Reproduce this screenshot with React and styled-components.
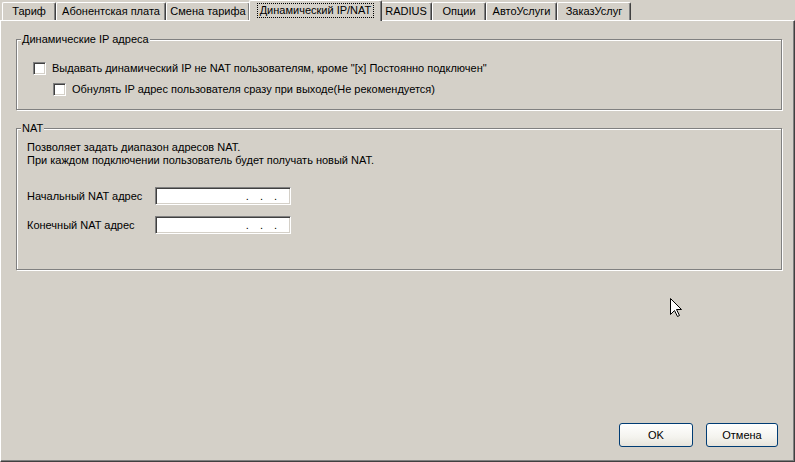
import React from 'react';
import styled, { createGlobalStyle } from 'styled-components';

const GlobalStyle = createGlobalStyle`
  html, body {
    margin: 0;
    padding: 0;
    background: #d4d0c8;
  }
  body {
    font-family: 'Liberation Sans', Arial, sans-serif;
    font-size: 11px;
    color: #000;
  }
`;

const Window = styled.div`
  position: relative;
  width: 795px;
  height: 462px;
  background: #d4d0c8;
  display: flex;
  flex-direction: column;
  overflow: hidden;
`;

const TabStrip = styled.div`
  height: 20px;
  display: flex;
  align-items: flex-start;
  padding-left: 2px;
  flex-shrink: 0;
`;

const Tab = styled.div`
  box-sizing: border-box;
  width: ${(p) => (p.$active ? p.$w + 3 : p.$w)}px;
  height: ${(p) => (p.$active ? 21 : 18)}px;
  margin: ${(p) => (p.$active ? '0 -2px -1px -1px' : '2px 0 0 0')};
  position: ${(p) => (p.$active ? 'relative' : 'static')};
  z-index: ${(p) => (p.$active ? 1 : 'auto')};
  background: #d4d0c8;
  border-top: 1px solid #fff;
  border-left: 1px solid #fff;
  border-right: 1px solid #404040;
  border-radius: 2px 2px 0 0;
  box-shadow: inset -1px 0 0 #808080;
  display: flex;
  justify-content: center;
  align-items: flex-start;
  padding-top: ${(p) => (p.$active ? 3 : 2)}px;
  white-space: nowrap;
  line-height: 13px;
`;

const Focus = styled.span`
  outline: 1px dotted #000;
  outline-offset: 0;
  padding: 0 2px;
  line-height: 13px;
`;

const Panel = styled.div`
  flex: 1;
  box-sizing: border-box;
  border-top: 1px solid #fff;
  border-left: 1px solid #fff;
  border-right: 1px solid #404040;
  border-bottom: 1px solid #404040;
  box-shadow: inset -1px -1px 0 #808080;
  display: flex;
  flex-direction: column;
  padding: 12px 16px 14px 15px;
`;

const Group = styled.fieldset`
  margin: ${(p) => p.$top || 0}px 0 0 0;
  width: 766px;
  box-sizing: border-box;
  min-width: 0;
  border: 1px solid #808080;
  box-shadow: inset 1px 1px 0 #fff, 1px 1px 0 #fff;
  padding: ${(p) => p.$pad};
`;

const Legend = styled.legend`
  margin-left: 0;
  padding: 0 1px;
  line-height: 13px;
  background: #d4d0c8;
`;

const GroupBody = styled.div`
  padding-left: ${(p) => p.$indent}px;
`;

const CheckRow = styled.label`
  display: flex;
  align-items: center;
  gap: 6px;
  height: 13px;
  margin-left: ${(p) => p.$indent || 0}px;
  margin-top: ${(p) => p.$gap || 0}px;
  line-height: 13px;
  white-space: nowrap;
`;

const Box = styled.span`
  width: 13px;
  height: 13px;
  box-sizing: border-box;
  background: #fff;
  border: 1px solid;
  border-color: #808080 #fff #fff #808080;
  box-shadow: inset 1px 1px 0 #404040, inset -1px -1px 0 #d4d0c8;
  flex-shrink: 0;
`;

const Note = styled.div`
  line-height: 13px;
  white-space: nowrap;
`;

const FieldRow = styled.div`
  display: flex;
  align-items: center;
  height: 18px;
  margin-top: ${(p) => p.$gap}px;
`;

const FieldLabel = styled.span`
  width: 128px;
  line-height: 13px;
`;

const IpBox = styled.div`
  width: 136px;
  height: 18px;
  box-sizing: border-box;
  background: #fff;
  border: 1px solid;
  border-color: #808080 #fff #fff #808080;
  box-shadow: inset 1px 1px 0 #404040, inset -1px -1px 0 #d4d0c8;
  display: flex;
  justify-content: flex-end;
  align-items: center;
  gap: 11px;
  padding-right: 13px;
  line-height: 13px;
`;

const Buttons = styled.div`
  margin-top: auto;
  display: flex;
  justify-content: flex-end;
  gap: 13px;
`;

const Button = styled.button`
  width: ${(p) => p.$w}px;
  height: 24px;
  box-sizing: border-box;
  border: 1px solid #003c74;
  border-radius: 3px;
  background: linear-gradient(#ffffff, #f4f3ee 60%, #e6e4dc);
  font-family: 'Liberation Sans', Arial, sans-serif;
  font-size: 11px;
  color: #000;
  padding: 0;
`;

const Cursor = styled.svg`
  position: absolute;
  left: 670px;
  top: 298px;
`;

const tabs = [
  ['Тариф', 54],
  ['Абонентская плата', 110],
  ['Смена тарифа', 84],
  ['Динамический IP/NAT', 130],
  ['RADIUS', 52],
  ['Опции', 54],
  ['АвтоУслуги', 71],
  ['ЗаказУслуг', 74],
];

const IpField = () => (
  <IpBox>
    <span>.</span>
    <span>.</span>
    <span>.</span>
  </IpBox>
);

export default function App() {
  return (
    <>
      <GlobalStyle />
      <Window>
        <TabStrip>
          {tabs.map(([name, w], i) =>
            i === 3 ? (
              <Tab key={name} $w={w} $active>
                <Focus>{name}</Focus>
              </Tab>
            ) : (
              <Tab key={name} $w={w}>
                {name}
              </Tab>
            )
          )}
        </TabStrip>
        <Panel>
          <Group $pad="16px 10px 13px 4px">
            <Legend>Динамические IP адреса</Legend>
            <GroupBody $indent={12}>
              <CheckRow>
                <Box />
                Выдавать динамический IP не NAT пользователям, кроме "[x] Постоянно подключен"
              </CheckRow>
              <CheckRow $indent={20} $gap={8}>
                <Box />
                Обнулять IP адрес пользователя сразу при выходе(Не рекомендуется)
              </CheckRow>
            </GroupBody>
          </Group>
          <Group $top={12} $pad="6px 10px 35px 4px">
            <Legend>NAT</Legend>
            <GroupBody $indent={6}>
              <Note>Позволяет задать диапазон адресов NAT.</Note>
              <Note>При каждом подключении пользователь будет получать новый NAT.</Note>
              <FieldRow $gap={20}>
                <FieldLabel>Начальный NAT адрес</FieldLabel>
                <IpField />
              </FieldRow>
              <FieldRow $gap={11}>
                <FieldLabel>Конечный NAT адрес</FieldLabel>
                <IpField />
              </FieldRow>
            </GroupBody>
          </Group>
          <Buttons>
            <Button $w={74}>OK</Button>
            <Button $w={72}>Отмена</Button>
          </Buttons>
        </Panel>
        <Cursor width="13" height="20" viewBox="0 0 13 20">
          <path
            d="M0.5 0.5 L0.5 16.5 L4.5 12.5 L7.5 18.5 L9.5 17.5 L6.5 11.5 L11.5 11.5 Z"
            fill="#fff"
            stroke="#000"
            strokeWidth="1"
          />
        </Cursor>
      </Window>
    </>
  );
}
